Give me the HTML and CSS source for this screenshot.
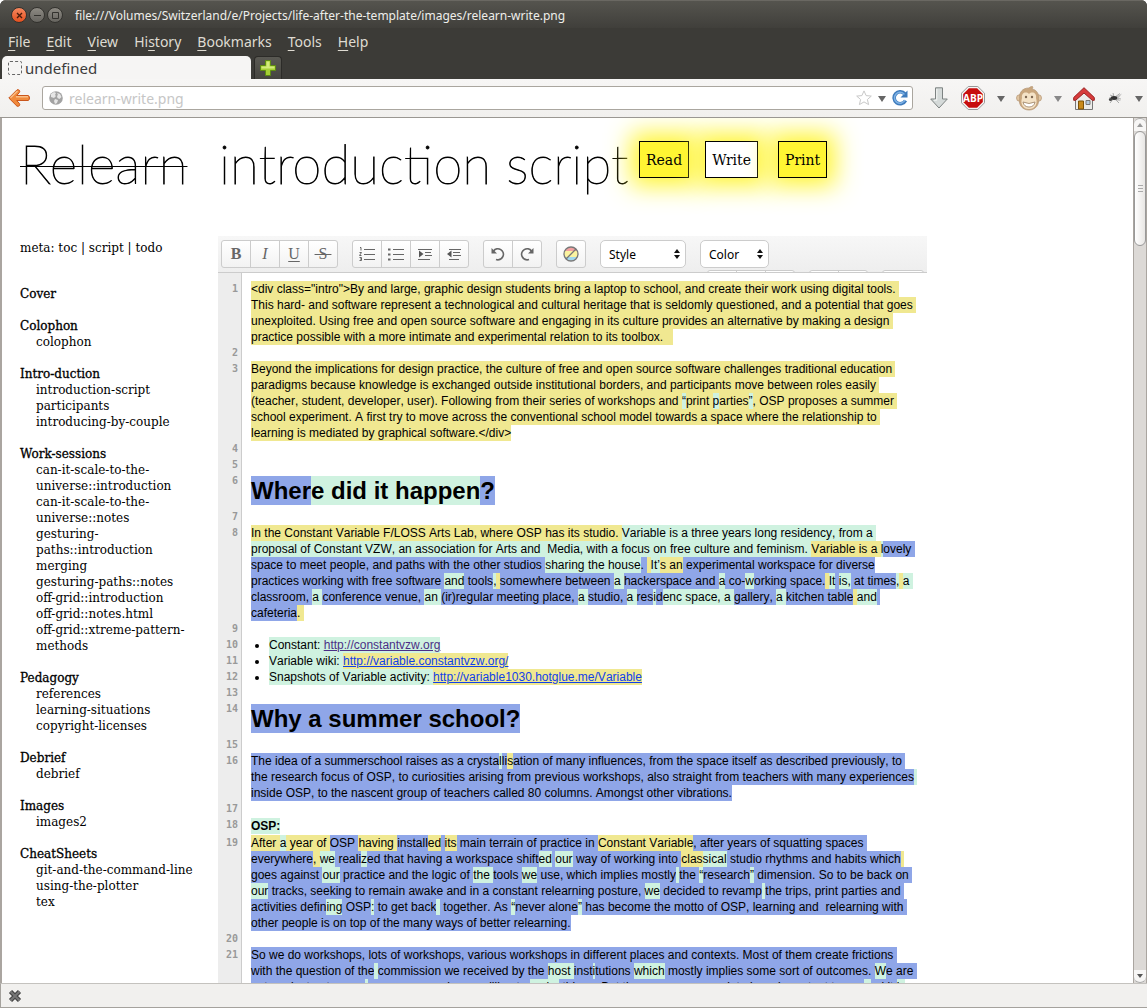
FILE: index.html
```html
<!DOCTYPE html>
<html lang="en">
<head>
<meta charset="utf-8">
<title>introduction script</title>
<link rel="stylesheet" href="styles.css">
</head>
<body>
<div class="window">
  <div class="titlebar">
    <button class="wbtn close" aria-label="Close"><svg width="7" height="7" viewBox="0 0 7 7"><path d="M1 1l5 5M6 1l-5 5" stroke="#4a1c0c" stroke-width="1.4"/></svg></button>
    <button class="wbtn" aria-label="Minimise"><svg width="7" height="7" viewBox="0 0 7 7"><path d="M0 3.500h7" stroke="#33322e"/></svg></button>
    <button class="wbtn" aria-label="Maximise"><svg width="7" height="7" viewBox="0 0 7 7"><path d="M.5.5h6v6h-6z" fill="none" stroke="#33322e"/></svg></button>
    <span class="wtitle">file:///Volumes/Switzerland/e/Projects/life-after-the-template/images/relearn-write.png</span>
  </div>
  <nav class="menubar">
    <a href="#"><u>F</u>ile</a><a href="#"><u>E</u>dit</a><a href="#"><u>V</u>iew</a><a href="#">Hi<u>s</u>tory</a><a href="#"><u>B</u>ookmarks</a><a href="#"><u>T</u>ools</a><a href="#"><u>H</u>elp</a>
  </nav>
  <div class="tabs">
    <div class="tab"><span class="favicon"></span>undefined</div>
    <button class="newtab" aria-label="New tab"><svg width="16" height="16" viewBox="0 0 16 16"><path d="M5.500.5h5v5h5v5h-5v5h-5v-5h-5v-5h5z" fill="#a5cf35" stroke="#5d8a12"/><path d="M6.500 1.500h3v5h5v2h-13v-2h5z" fill="#d3ea7c"/></svg></button>
  </div>
  <div class="navbar">
    <button class="ico back" aria-label="Back"><svg width="22" height="18" viewBox="0 0 22 18"><path d="M9 .8c2-.6 3.500 1 2.400 2.700L8.700 6.500H20c2 0 2 5 0 5H8.700l2.700 3c1.100 1.700-.4 3.300-2.400 2.700L.8 9z" fill="#f08a3c" stroke="#c9561c"/><path d="M2.500 8.700L9.500 2M8 7.700h12" stroke="#f9bd86" stroke-width="1.500" fill="none"/></svg></button>
    <div class="urlbar">
      <svg width="14" height="14" viewBox="0 0 14 14"><circle cx="7" cy="7" r="6.800" fill="#a3a3a3"/><path d="M2 3l3-2 2 1-1 2 1 1-2 2-3-1zM8 2l3 1 1.500 3-2 2-2-1-.5-2 1-1zM6 8l3 1-1 3-2 1-1-3z" fill="#e6e6e6"/></svg>
      <input class="url" type="text" value="relearn-write.png" aria-label="Address">
      <svg width="16" height="16" viewBox="0 0 16 16"><path d="M8 .9l2.100 4.700 5.200.5-3.900 3.400 1.200 5.100L8 11.900l-4.600 2.700 1.200-5.100L.7 6.100l5.200-.5z" fill="#fff" stroke="#c8c8c8"/></svg>
      <svg class="caret" width="8" height="6" viewBox="0 0 8 6"><path d="M0 0h8L4 6z" fill="#666"/></svg>
      <svg width="16" height="16" viewBox="0 0 16 16"><path d="M12.800 4A6 6 0 1 0 13.500 10.500" fill="none" stroke="#3f7cbd" stroke-width="3.600"/><path d="M15.500.5v7h-7z" fill="#3f7cbd"/><path d="M12.400 4.500A5.500 5.500 0 1 0 13 10" fill="none" stroke="#7fb2e5" stroke-width="1.500"/></svg>
    </div>
    <div class="tools">
      <svg width="20" height="22" viewBox="0 0 20 22"><path d="M6.500.8h7V12h4.800L10 21 1.700 12h4.800z" fill="#d5dad9" stroke="#7d8382"/><path d="M7.800 2v11.200H5" fill="none" stroke="#f5f7f6"/></svg>
      <svg width="24" height="24" viewBox="0 0 24 24"><path d="M7.200.5h9.600l6.700 6.700v9.600l-6.700 6.700H7.200L.5 16.800V7.200z" fill="#f6f6f6" stroke="#999"/><path d="M7.900 2.200h8.200l5.700 5.700v8.200l-5.700 5.700H7.900l-5.700-5.700V7.900z" fill="#c70d0d"/><text x="12" y="16" text-anchor="middle" class="abp">ABP</text></svg>
      <svg class="caret" width="8" height="6" viewBox="0 0 8 6"><path d="M0 0h8L4 6z" fill="#666"/></svg>
      <svg width="26" height="25" viewBox="0 0 26 25"><g stroke="#b99c7c" stroke-width=".8"><circle cx="3.800" cy="12" r="3.300" fill="#e3c7a2"/><circle cx="22.200" cy="12" r="3.300" fill="#e3c7a2"/><path d="M13 2c2-2 4-1.500 4-1l-1 2c5 1 7 5 6.500 9.500 1 6-3 11.500-9.500 11.500S2.500 19 3.500 12.500C3 7 6 2 13 2z" fill="#c9a67d"/></g><path d="M13 8c3-3 8-1 7 4 2 6-1 11-7 11s-9-5-7-11c-1-5 4-7 7-4z" fill="#f4e2c6"/><circle cx="10" cy="11" r="1.200" fill="#7d6650"/><circle cx="16" cy="11" r="1.200" fill="#7d6650"/><path d="M7 16q6 3 12 0-1 5-6 5t-6-5z" fill="#fff" stroke="#9a8064" stroke-width=".8"/></svg>
      <svg class="caret" width="8" height="6" viewBox="0 0 8 6"><path d="M0 0h8L4 6z" fill="#888"/></svg>
      <svg width="22" height="23" viewBox="0 0 22 23"><path d="M2.500 10v12.500h17V10L11 3z" fill="#ececea" stroke="#777"/><path d="M5.500 22v-8h5v8z" fill="#c98a1b" stroke="#7d5208"/><path d="M13 13.500h4v4h-4z" fill="#b8cde0" stroke="#777"/><path d="M11 .7L.7 10.500v2.800h2L11 6l8.300 7.300h2v-2.800z" fill="#d73b3b" stroke="#982020"/></svg>
      <svg width="16" height="13" viewBox="0 0 16 13"><path d="M3 3l5 2 5-3.500M2 6l6 0 6 1M3 11l4-5 5 5M7 5L6 1" fill="none" stroke="#999" stroke-width=".8"/><path d="M8 5L15 1.500 11 7z" fill="#c4c4c4"/><path d="M7 8l7 1-4-3z" fill="#bbb"/><ellipse cx="7" cy="6" rx="3.300" ry="1.900" fill="#333"/><circle cx="3.500" cy="7.500" r="1.600" fill="#444"/></svg>
      <svg class="caret" width="8" height="6" viewBox="0 0 8 6"><path d="M0 0h8L4 6z" fill="#666"/></svg>
    </div>
  </div>
  <div class="viewport">
    <div class="page">
      <header class="head">
        <h1 class="brand"><s>Relearn</s></h1>
        <h2 class="title">introduction script</h2>
        <div class="modes"><a class="mode" href="#">Read</a><a class="mode current" href="#">Write</a><a class="mode last" href="#">Print</a></div>
      </header>
      <div class="cols">
        <nav class="side">
          <p class="meta">meta: <a href="#">toc</a> | <a href="#">script</a> | <a href="#">todo</a></p>
          <h3>Cover</h3>
          <h3>Colophon</h3>
          <ul><li><a href="#">colophon</a></li></ul>
          <h3>Intro-duction</h3>
          <ul><li><a href="#">introduction-script</a></li><li><a href="#">participants</a></li><li><a href="#">introducing-by-couple</a></li></ul>
          <h3>Work-sessions</h3>
          <ul><li><a href="#">can-it-scale-to-the-<br>universe::introduction</a></li><li><a href="#">can-it-scale-to-the-<br>universe::notes</a></li><li><a href="#">gesturing-<br>paths::introduction</a></li><li><a href="#">merging</a></li><li><a href="#">gesturing-paths::notes</a></li><li><a href="#">off-grid::introduction</a></li><li><a href="#">off-grid::notes.html</a></li><li><a href="#">off-grid::xtreme-pattern-<br>methods</a></li></ul>
          <h3>Pedagogy</h3>
          <ul><li><a href="#">references</a></li><li><a href="#">learning-situations</a></li><li><a href="#">copyright-licenses</a></li></ul>
          <h3>Debrief</h3>
          <ul><li><a href="#">debrief</a></li></ul>
          <h3>Images</h3>
          <ul><li><a href="#">images2</a></li></ul>
          <h3>CheatSheets</h3>
          <ul><li><a href="#">git-and-the-command-line</a></li><li><a href="#">using-the-plotter</a></li><li><a href="#">tex</a></li></ul>
        </nav>
        <main class="pad">
          <div class="toolbar">
            <div class="bar">
              <div class="group"><button class="b">B</button><button class="i">I</button><button class="u">U</button><button class="s">&nbsp;S&nbsp;</button></div>
              <div class="group">
                <button aria-label="Ordered list"><svg width="16" height="16" viewBox="0 0 16 16"><path d="M5 3.500h11M5 8.500h11M5 13.500h11" stroke="#666"/><path d="M1 1.500h1v3M.5 6.500h2l-2 3h2M.5 11.500h2v3h-2M1 13h1" fill="none" stroke="#666"/></svg></button>
                <button aria-label="Unordered list"><svg width="16" height="16" viewBox="0 0 16 16"><path d="M5 3.500h11M5 8.500h11M5 13.500h11" stroke="#666"/><path d="M0 3.500h2.500M0 8.500h2.500M0 13.500h2.500" stroke="#666" stroke-width="2.200"/></svg></button>
                <button aria-label="Indent"><svg width="16" height="16" viewBox="0 0 16 16"><path d="M1 3.500h14M8 6.500h6M8 9.500h7M1 13.500h12" stroke="#666"/><path d="M2 4.500v7L6.500 8z" fill="#555"/></svg></button>
                <button aria-label="Outdent"><svg width="16" height="16" viewBox="0 0 16 16"><path d="M3 3.500h12M7 6.500h7M7 9.500h8M3 13.500h10" stroke="#666"/><path d="M5.500 4.500v7L1 8z" fill="#555"/></svg></button>
              </div>
              <div class="group">
                <button aria-label="Undo"><svg width="14" height="14" viewBox="0 0 14 14"><path d="M2.500 4A5.500 5.500 0 1 1 5 12.500" fill="none" stroke="#666" stroke-width="1.700"/><path d="M.5 1v5.500H6z" fill="#666"/></svg></button>
                <button aria-label="Redo"><svg width="14" height="14" viewBox="0 0 14 14"><path d="M11.500 4A5.500 5.500 0 1 0 9 12.500" fill="none" stroke="#666" stroke-width="1.700"/><path d="M13.500 1v5.500H8z" fill="#666"/></svg></button>
              </div>
              <div class="group"><button aria-label="Clear authorship colors"><svg width="16" height="16" viewBox="0 0 16 16"><path d="M2 5a6.800 6.800 0 0 1 12 0z" fill="#f4a0a0"/><path d="M2 5h12q2 3 0 6H2q-2-3 0-6z" fill="#fbf3a0"/><path d="M2 11a6.800 6.800 0 0 0 12 0z" fill="#a0d8ef"/><circle cx="8" cy="8" r="7" fill="none" stroke="#777" stroke-width="1.300"/><path d="M3 13L13 3" stroke="#777" stroke-width="1.300"/></svg></button></div>
              <div class="pick style"><select aria-label="Style"><option>Style</option></select><svg width="6" height="10" viewBox="0 0 6 10"><path d="M3 0l3 4H0zM0 6h6l-3 4z" fill="#111"/></svg></div>
              <div class="pick"><select aria-label="Color"><option>Color</option></select><svg width="6" height="10" viewBox="0 0 6 10"><path d="M3 0l3 4H0zM0 6h6l-3 4z" fill="#111"/></svg></div>
            </div>
            <div class="bar second">
              <div class="group"><button aria-label="Import"></button><button aria-label="Timeslider"></button><button aria-label="Save revision"></button></div>
              <div class="group"><button aria-label="Settings"></button><button aria-label="Embed"></button></div>
              <div class="group"><button class="wide" aria-label="Users"></button></div>
            </div>
          </div>
          <div class="doc">
<div class="row"><span class="no">1</span><p><span class="y">&lt;div class="intro"&gt;By and large, graphic design students bring a laptop to school, and create their work using digital tools. 
This hard- and software represent a technological and cultural heritage that is seldomly questioned, and a potential that goes 
unexploited. Using free and open source software and engaging in its culture provides an alternative by making a design 
practice possible with a more intimate and experimental relation to its toolbox.   </span></p></div>
<div class="row"><span class="no">2</span><p></p></div>
<div class="row"><span class="no">3</span><p><span class="y">Beyond the implications for design practice, the culture of free and open source software challenges traditional education 
paradigms because knowledge is exchanged outside institutional borders, and participants move between roles easily 
(teacher, student, developer, user). Following from their series of workshops and <span class="g">“</span>print <span class="g">p</span>arties<span class="g">”</span>, OSP proposes a summer 
school experiment. A first try to move across the conventional school model towards a space where the relationship to 
learning is mediated by graphical software.&lt;/div&gt;</span></p></div>
<div class="row"><span class="no">4</span><p></p></div>
<div class="row"><span class="no">5</span><p></p></div>
<div class="row"><span class="no">6</span><h4><span class="b">Wher</span><span class="g">e did it happen</span><span class="b">?</span></h4></div>
<div class="row"><span class="no">7</span><p></p></div>
<div class="row"><span class="no">8</span><p><span class="y">In the Constant Variable F/LOSS Arts Lab, where OSP has its studio. </span><span class="g">Variable is a three years long residency, from a 
proposal of Constant VZW, an association for Arts and  Media, with a focus on free culture and feminism. </span><span class="y">Variable is a </span><span class="b"><span class="g">l</span>ovely 
space to meet people, and paths with the other studios <span class="g">sharing the house</span>. <span class="y"> </span><span class="g">It’</span><span class="y">s an</span> experimental workspace for diverse
practices working with free software <span class="g">and</span> tools<span class="g">,</span><span class="y"> </span>somewhere between <span class="g">a </span>hackerspace and <span class="g">a</span> co-<span class="g">w</span>orking space.<span class="y"> </span><span class="g">It</span> <span class="g">is,</span> at times<span class="g">,</span><span class="y"> </span><span class="g">a </span>
classroom, <span class="g">a </span>conference venue, <span class="g">an </span>(ir)regular meeting place, <span class="g">a </span>studio, <span class="g">a </span>res<span class="g">i</span>d<span class="g">enc space, a </span>gallery, <span class="g">a </span>kitchen table<span class="y"> </span><span class="g">and</span> 
cafeteria<span class="y">. </span></span></p></div>
<div class="row"><span class="no">9</span><p></p></div>
<div class="row"><span class="no">10</span><p class="item"><span class="g">Constant: <a class="seen" href="http://constantvzw.org">http://constantvzw.org</a></span></p></div>
<div class="row"><span class="no">11</span><p class="item"><span class="g">Variable wiki: <a class="y" href="http://variable.constantvzw.org/">http://variable.constantvzw.org/</a></span></p></div>
<div class="row"><span class="no">12</span><p class="item"><span class="g">Snapshots of Variable activity: <a class="y" href="http://variable1030.hotglue.me/Variable">http://variable1030.hotglue.me/Variable</a></span></p></div>
<div class="row"><span class="no">13</span><p></p></div>
<div class="row"><span class="no">14</span><h4><span class="b">Why a summer school?</span></h4></div>
<div class="row"><span class="no">15</span><p></p></div>
<div class="row"><span class="no">16</span><p><span class="b">The idea of a summerschool raises as a crysta<span class="g">l</span>li<span class="y">s</span>ation of many influences, from the space itself as described previously, to 
the research focus of OSP, to curiosities arising from previous workshops, also straight from teachers with many experiences<span class="g"> </span>
inside OSP, to the nascent group of teachers called 80 columns. Amongst other vibrations.</span></p></div>
<div class="row"><span class="no">17</span><p></p></div>
<div class="row"><span class="no">18</span><h5><span class="g">OSP:</span></h5></div>
<div class="row"><span class="no">19</span><p><span class="b"><span class="y">After <span class="g">a</span> year of </span>OSP <span class="y">having </span>install<span class="y">ed</span> <span class="y">its</span> main terrain of practice in <span class="y">Constant Variable</span>, after years of squatting spaces 
everywhere<span class="y">, </span><span class="g">we</span> reali<span class="g">z</span>ed that having a workspace shift<span class="g">ed</span> <span class="g">our</span> way of working into <span class="y">clas</span><span class="g">sical</span> studio rhythms and habits which<span class="y"> </span>
goes against <span class="g">our</span> practice and the logic of <span class="g">the </span>tools <span class="g">we</span> use, which implies mostly<span class="g"> </span>the <span class="g">“</span>research<span class="g">”</span> dimension. So to be back on 
<span class="g">our</span> tracks, seeking to remain awake and in a constant relearning posture, <span class="g">we</span> decided to revamp<span class="g"> </span>the trips, print parties and 
activities defin<span class="g">ing</span> OSP<span class="g">:</span> to get back<span class="g"> </span> together. As <span class="g">“</span>never alone<span class="g">”</span> has become the motto of OSP, learning and  relearning with 
other people is on top of the many ways of better relearning.</span></p></div>
<div class="row"><span class="no">20</span><p></p></div>
<div class="row"><span class="no">21</span><p><span class="b">So we do workshops, lots of workshops, various workshops in different places and contexts. Most of them create frictions 
with the question of the<span class="g"> </span>commission we received by the <span class="g">host </span>inst<span class="g">i</span>tutions <span class="g">which</span> mostly implies some sort of outcomes. <span class="g">W</span>e are 
not against outcomes<span class="g">,</span> we are even always willing to <span class="g">make</span> things. But the process we are into is as important to us, <span class="g">a</span>nd it <span class="g">is</span></span></p></div>
          </div>
        </main>
      </div>
    </div>
    <div class="scroll">
      <span class="arrow"><svg width="6" height="4" viewBox="0 0 6 4"><path d="M3 0l3 4H0z" fill="#999"/></svg></span>
      <span class="thumb"><svg width="5" height="8" viewBox="0 0 5 8"><path d="M0 .5h5M0 3.500h5M0 6.500h5" stroke="#aaa"/></svg></span>
      <span class="trough"></span>
      <span class="arrow end"><svg width="6" height="4" viewBox="0 0 6 4"><path d="M0 0h6L3 4z" fill="#555"/></svg></span>
    </div>
  </div>
  <div class="status"><button class="ico" aria-label="Close bar"><svg width="14" height="14" viewBox="0 0 14 14"><path d="M2.500 2.500l9 9M11.500 2.500l-9 9" stroke="#444" stroke-width="4.500"/><path d="M2.500 2.500l9 9M11.500 2.500l-9 9" stroke="#777" stroke-width="2"/></svg></button></div>
</div>
</body>
</html>
```
FILE: styles.css
```css
* { box-sizing: border-box; }
body { margin: 0; background: #fff; font-family: "Liberation Sans", Arial, sans-serif; font-size: 12px; color: #000; }
button, input, select { font: inherit; margin: 0; padding: 0; }
a { color: inherit; text-decoration: none; }
svg { display: block; flex: none; }
h1, h2, h3, h4, h5, p, ul { margin: 0; padding: 0; font-weight: normal; }

.window { height: 100vh; display: flex; flex-direction: column; overflow: hidden; border-radius: 6px 6px 0 0; background: #3c3b37; }
.titlebar { flex: none; height: 28px; display: flex; align-items: center; gap: 2px; padding: 1px 11px 0; background: linear-gradient(#55544e, #403f3b); border-top: 1px solid #6a6862; font-family: "Noto Sans", sans-serif; color: #eeeeea; }
.wbtn { width: 16px; height: 16px; border-radius: 50%; border: 1px solid #33322e; background: linear-gradient(#8d8a83, #66645f); display: flex; align-items: center; justify-content: center; }
.wbtn.close { background: linear-gradient(#f7885f, #e4501f); }
.wtitle { margin-left: 10px; font-size: 12px; white-space: nowrap; }
.menubar { flex: none; height: 27px; display: flex; align-items: center; gap: 16px; padding: 0 8px; font: 14px "Noto Sans", sans-serif; color: #dfdbd2; }
.menubar u { text-underline-offset: 3px; }
.tabs { flex: none; height: 24px; display: flex; gap: 3px; padding: 1px 2px 0; }
.tab { width: 249px; display: flex; align-items: center; gap: 3px; padding-left: 6px; border-radius: 5px 5px 0 0; background: #f6f5f4; color: #3c3c3c; font: 15px "Noto Sans", sans-serif; }
.favicon { width: 14px; height: 14px; border: 1px dashed #666; border-radius: 2px; }
.newtab { width: 28px; border: 1px solid #2c2b28; border-bottom: 0; border-radius: 4px 4px 0 0; background: linear-gradient(#5a5953, #45443f); display: flex; align-items: center; justify-content: center; }
.navbar { flex: none; height: 39px; display: flex; align-items: center; padding: 0 5px 0 8px; background: linear-gradient(#f7f6f5, #f1f0ee); border-bottom: 1px solid #9a9792; }
.ico { border: 0; background: none; }
.back { margin-right: 12px; }
.urlbar { flex: 1; height: 24px; display: flex; align-items: center; padding: 0 4px 0 6px; border: 1px solid #aaa69f; border-radius: 3px; background: #fff; }
.url { flex: 1; min-width: 0; border: 0; outline: 0; padding: 0 6px; color: #c6c6c6; background: none; font: 14px "Noto Sans", sans-serif; }
.urlbar .caret { margin: 2px 6px 0; }
.tools { display: flex; align-items: center; gap: 12px; padding-left: 16px; }
.tools .caret { margin: 2px -1px 0 0; }
.abp { font: bold 10px "Open Sans", sans-serif; fill: #fff; }

.viewport { flex: 1; min-height: 0; display: flex; border-left: 2px solid #aaa5a0; border-right: 1px solid #aaa5a0; background: #fff; }
.page { flex: 1; min-width: 0; overflow: hidden; }
.head { height: 118px; display: flex; align-items: flex-start; padding: 16px 0 0 18px; white-space: nowrap; font-family: Lato, sans-serif; }
.brand, .title { font-size: 53px; line-height: 60px; font-weight: 100; -webkit-text-stroke: 0.8px #000; }
.brand { width: 199px; }
.brand s { text-decoration-thickness: 1px; -webkit-text-stroke: 0.8px #000; }
.title { width: 420px; }
.modes { display: flex; gap: 16px; padding-top: 7px; font: 14px "DejaVu Serif", serif; }
.mode { height: 37px; display: flex; align-items: center; padding: 0 6px; border: 1px solid #000; background: #fff533; box-shadow: 0 0 24px 8px #fff533; }
.mode.current { background: #fff; }
.mode.last { margin-left: 4px; }

.cols { display: grid; grid-template-columns: 216px minmax(0, 709px); align-items: start; }
.side { padding: 4px 0 0 18px; font: 12px/16px "DejaVu Serif", serif; }
.meta { margin-bottom: 30px; }
.side h3 { font: inherit; -webkit-text-stroke: 0.3px #000; }
.side h3 + h3, .side ul + h3 { margin-top: 16px; }
.side ul { list-style: none; padding-left: 16px; white-space: nowrap; }

.toolbar { height: 37px; overflow: hidden; padding: 4px 3px 0; background: linear-gradient(#f7f7f7, #eee); border-bottom: 1px solid #ccc; }
.bar { display: flex; gap: 14px; }
.second { justify-content: flex-end; margin-top: 2px; }
.group { display: flex; height: 28px; border: 1px solid #ccc; border-radius: 3px; background: linear-gradient(#fff, #f2f2f2); }
.group button { width: 29px; border: 0; border-right: 1px solid #ccc; background: none; display: flex; align-items: center; justify-content: center; color: #666; font: 16px "Liberation Serif", serif; }
.group button:last-child { width: 28px; border: 0; }
.group .wide:last-child { width: 40px; }
.group .b { font-weight: bold; }
.group .i { font-style: italic; }
.group .u { text-decoration: underline; text-underline-offset: 2px; }
.group .s { text-decoration: line-through; }
.pick { position: relative; width: 69px; height: 28px; }
.pick.style { width: 86px; }
.pick select { appearance: none; width: 100%; height: 28px; padding: 0 8px; border: 1px solid #ccc; border-radius: 5px; background: #fff; font: 12px "Noto Sans", sans-serif; color: #000; }
.pick svg { position: absolute; right: 6px; top: 9px; pointer-events: none; }

.doc { padding-top: 8px; line-height: 16px; font-kerning: none; background: linear-gradient(to right, #ededed 23px, #ccc 23px, #ccc 24px, #fff 24px); }
.row { display: grid; grid-template-columns: 20px minmax(0, 1fr); column-gap: 13px; }
.no { text-align: right; font: bold 10px/16px "DejaVu Sans Mono", monospace; color: #999; }
.row p, .row h4, .row h5 { white-space: pre; }
.row span, .row a { padding: 1px 0; }
.row .no { padding: 0; }
.row h4 { font-size: 24px; line-height: 36px; font-weight: bold; }
.row h5 { font-size: 12px; line-height: 18px; font-weight: bold; }
.y { background: #f0e891; }
.g { background: #cff2e0; }
.b { background: #8fa6e8; }
.group .b { background: none; }
.row .item { display: list-item; list-style: disc; margin-left: 18px; }
.item a { color: #0f40ea; text-decoration: underline; }
.item .seen { color: #4b2f86; }

.scroll { flex: none; width: 13px; display: flex; flex-direction: column; background: #dcd9d6; border-left: 1px solid #aaa5a0; }
.arrow { height: 13px; display: flex; align-items: center; justify-content: center; background: #f7f6f5; border-radius: 6px 6px 0 0; border-top: 1px solid #aaa; }
.thumb { height: 115px; display: flex; align-items: center; justify-content: center; border: 1px solid #999; border-radius: 6px; background: linear-gradient(to right, #fff, #e8e6e4); }
.trough { flex: 1; }
.arrow.end { border-radius: 0 0 6px 6px; border-top: 0; border-bottom: 1px solid #aaa; }
.status { flex: none; height: 25px; display: flex; align-items: center; padding-left: 7px; background: #f1f0ee; border-top: 1px solid #c4c2be; border-bottom: 1px solid #a5a29d; border-left: 1px solid #a5a29d; }
```
